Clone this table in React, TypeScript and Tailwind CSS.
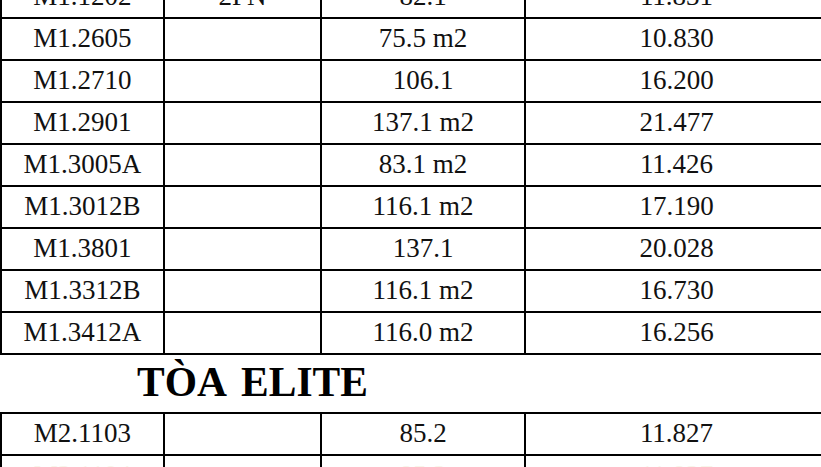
import React from "react";

type Row = [string, string, string, string];

const rowsA: Row[] = [
  ["M1.1202", "2PN", "82.1", "11.831"],
  ["M1.2605", "", "75.5 m2", "10.830"],
  ["M1.2710", "", "106.1", "16.200"],
  ["M1.2901", "", "137.1 m2", "21.477"],
  ["M1.3005A", "", "83.1 m2", "11.426"],
  ["M1.3012B", "", "116.1 m2", "17.190"],
  ["M1.3801", "", "137.1", "20.028"],
  ["M1.3312B", "", "116.1 m2", "16.730"],
  ["M1.3412A", "", "116.0 m2", "16.256"],
];

const rowsB: Row[] = [["M2.1103", "", "85.2", "11.827"]];

function TableRow({ r, faint }: { r: Row; faint?: boolean }) {
  const txt = faint ? "text-[#f8f5e9]" : "text-[#111111]";
  return (
    <div className={`flex h-[42px] border-b-2 border-black ${txt}`}>
      <div className="w-[165px] shrink-0 border-l-2 border-r-2 border-black flex items-center justify-center">
        {r[0]}
      </div>
      <div className="w-[157px] shrink-0 border-r-2 border-black flex items-center justify-center">
        {r[1]}
      </div>
      <div className="w-[204px] shrink-0 border-r-2 border-black flex items-center justify-center">
        {r[2]}
      </div>
      <div className="w-[301px] shrink-0 flex items-center justify-center">
        {r[3]}
      </div>
    </div>
  );
}

export default function App() {
  return (
    <div
      className="w-[821px] h-[467px] overflow-hidden bg-white text-[27px] leading-[1.107]"
      style={{ fontFamily: '"Liberation Serif", "Times New Roman", serif' }}
    >
      <div className="mt-[-25px] w-[827px] border-t-2 border-black">
        {rowsA.map((r, i) => (
          <TableRow key={i} r={r} />
        ))}
      </div>
      <div className="h-[57px] pt-[5px] pl-[137px] text-[41.5px] font-bold text-black leading-[1.107] [word-spacing:6px]">
        TÒA ELITE
      </div>
      <div className="w-[827px] border-t-2 border-black">
        {rowsB.map((r, i) => (
          <TableRow key={i} r={r} />
        ))}
        <TableRow r={["M2.1104", "", "85.2", "11.827"]} faint />
      </div>
    </div>
  );
}
